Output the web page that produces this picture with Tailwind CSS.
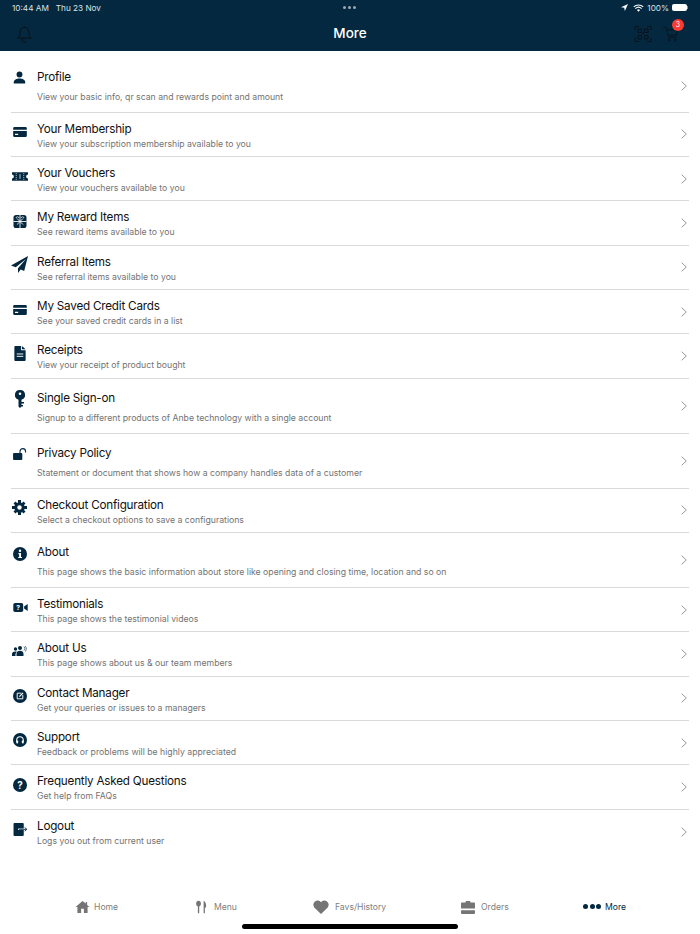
<!DOCTYPE html>
<html lang="en">
<head>
<meta charset="UTF-8">
<title>More</title>
<script src="https://cdn.jsdelivr.net/npm/@tailwindcss/browser@4"></script>
</head>
<body class="bg-white font-['Inter',sans-serif] text-black">
<div class="relative flex h-[934px] w-[700px] flex-col overflow-hidden">

  <!-- Header -->
  <header class="h-[51px] shrink-0 bg-[#03283f] text-white">
    <div class="flex h-[16px] items-center justify-between pl-[12px] pr-[12px] text-[8.2px] text-[#dbe3e8]">
      <div class="flex gap-[7px]"><span>10:44 AM</span><span>Thu 23 Nov</span></div>
      <div class="flex items-center gap-[3px]">
        <svg class="h-[7px] w-[7px]" viewBox="0 0 10 10"><path d="M10 0 0 4.500l4.600.8.9 4.700z" fill="#fff"/></svg>
        <svg class="ml-[2px] h-[8px] w-[11px]" viewBox="0 0 12 8" fill="none" stroke="#fff" stroke-width="1.200"><path d="M.8 2.800a7.600 7.600 0 0 1 10.400 0M2.600 4.600a5 5 0 0 1 6.800 0"/><path d="M6 8 4.300 6.200a2.500 2.500 0 0 1 3.400 0z" fill="#fff" stroke="none"/></svg>
        <span>100%</span>
        <div class="flex items-center"><div class="h-[7px] w-[15px] rounded-[2px] bg-white"></div><div class="h-[3px] w-[1px] bg-white/50"></div></div>
      </div>
    </div>
    <div class="relative flex h-[35px] items-center justify-between pl-[16px] pr-[20px]">
      <svg class="h-[18px] w-[17px]" viewBox="0 0 17 17" fill="none" stroke="#0b0f14" stroke-width=".9"><path d="M8.500 1.800c-3 0-4.300 2.200-4.300 5 0 3-1 4.500-2.400 5.800h13.400c-1.400-1.300-2.400-2.800-2.400-5.800 0-2.800-1.300-5-4.300-5zM8.500 1.800V.6M6.800 12.800a1.800 1.800 0 0 0 3.400 3.200"/></svg>
      <div class="absolute left-0 right-0 top-[8px] text-center text-[13.5px] font-medium leading-[19px]">More</div>
      <div class="flex items-center gap-[10px]">
        <svg class="h-[18px] w-[18px]" viewBox="0 0 18 18" fill="none" stroke="#0b0f14" stroke-width=".9"><path d="M1 5V1.500h4M13 1.500h4V5M17 13v3.500h-4M5 16.500H1V13"/><path d="M4 4h3.500v3.500H4zM10.500 4H14v3.500h-3.500zM4 10.500h3.500V14H4zM10.500 10.500H14V14h-3.500zM8 9l2-1.500"/></svg>
        <div class="relative h-[17px] w-[18px]">
          <svg class="h-[17px] w-[18px]" viewBox="0 0 18 20" fill="none" stroke="#0b0f14" stroke-width=".9"><path d="M0 2.500h3l3.300 12h9M4 5.500h13l-1.800 6.500H6"/><circle cx="7" cy="17.500" r="1.200"/><circle cx="14" cy="17.500" r="1.200"/></svg>
          <div class="absolute right-[-4px] top-[-6px] flex h-[12px] w-[12px] items-center justify-center rounded-full bg-[#fb3a30] text-[7px] text-white">3</div>
        </div>
      </div>
    </div>
  </header>

  <!-- List -->
  <main class="flex flex-col pl-[11px] pr-[11px]">

    <a class="flex h-[61.5px] items-start border-b border-[#d9d9d9]">
      <div class="w-[26px] shrink-0 pl-[2px] pt-[20px]"><svg class="h-[13px] w-[13px]" viewBox="0 0 16 15" fill="#03283f"><circle cx="8" cy="3.800" r="3.600"/><path d="M1 15v-1.800C1 10 4.500 8.600 8 8.600s7 1.400 7 4.600V15z"/></svg></div>
      <div class="flex-1 pt-[18px]"><div class="mb-[5.5px] text-[11.7px] leading-[16px] tracking-[-0.22px] text-[#111]">Profile</div><div class="text-[8.7px] leading-[13px] text-[#737373]">View your basic info, qr scan and rewards point and amount</div></div>
      <svg class="mr-[2px] mt-[30px] h-[10px] w-[6px]" viewBox="0 0 6 10" fill="none" stroke="#999"><path d="m.7.700 4.600 4.300L.7 9.300"/></svg>
    </a>

    <a class="flex h-[44.35px] items-center border-b border-[#d9d9d9]">
      <div class="mb-[4px] w-[26px] shrink-0 pl-[2px]"><svg class="h-[10px] w-[14px]" viewBox="0 0 15 11" fill="#03283f"><path d="M0 1.500A1.500 1.500 0 0 1 1.500 0h12A1.500 1.500 0 0 1 15 1.500V3H0zM0 4.500h15v5A1.500 1.500 0 0 1 13.500 11h-12A1.500 1.500 0 0 1 0 9.500zM2 7.500v1.300h3.500V7.500z" fill-rule="evenodd"/></svg></div>
      <div class="flex-1 pt-[3px]"><div class="text-[11.7px] leading-[16px] tracking-[-0.22px] text-[#111]">Your Membership</div><div class="mt-[1px] text-[8.7px] leading-[13px] text-[#737373]">View your subscription membership available to you</div></div>
      <svg class="mr-[2px] h-[10px] w-[6px]" viewBox="0 0 6 10" fill="none" stroke="#999"><path d="m.7.700 4.600 4.300L.7 9.300"/></svg>
    </a>

    <a class="flex h-[44.35px] items-center border-b border-[#d9d9d9]">
      <div class="mb-[4px] w-[26px] shrink-0 pl-[1px]"><svg class="h-[9px] w-[16px]" viewBox="0 0 17 9" fill="#03283f"><path d="M0 0h17v2.500a2 2 0 0 0 0 4V9H0V6.500a2 2 0 0 0 0-4z"/><path d="M4 1.500h1M4 3.500h1M4 5.500h1M4 7.500h1M12 1.500h1M12 3.500h1M12 5.500h1M12 7.500h1M8.500 2v5" stroke="#fff" stroke-width=".8"/></svg></div>
      <div class="flex-1 pt-[3px]"><div class="text-[11.7px] leading-[16px] tracking-[-0.22px] text-[#111]">Your Vouchers</div><div class="mt-[1px] text-[8.7px] leading-[13px] text-[#737373]">View your vouchers available to you</div></div>
      <svg class="mr-[2px] h-[10px] w-[6px]" viewBox="0 0 6 10" fill="none" stroke="#999"><path d="m.7.700 4.600 4.300L.7 9.300"/></svg>
    </a>

    <a class="flex h-[44.35px] items-center border-b border-[#d9d9d9]">
      <div class="mb-[3px] w-[26px] shrink-0 pl-[2px]"><svg class="h-[13px] w-[14px]" viewBox="0 0 15 15"><rect width="15" height="15" rx="3" fill="#03283f"/><path d="M0 7.500h15M7.500 0v15M7.500 7.500 4 4M7.500 7.500 11 4M7.500 7.500 4 11M7.500 7.500 11 11" stroke="#fff" stroke-width="1"/><path d="M3 3.500a1.500 1.500 0 0 1 3 0M9 3.500a1.500 1.500 0 0 1 3 0" stroke="#fff" fill="none" stroke-width=".8"/></svg></div>
      <div class="flex-1 pt-[3px]"><div class="text-[11.7px] leading-[16px] tracking-[-0.22px] text-[#111]">My Reward Items</div><div class="mt-[1px] text-[8.7px] leading-[13px] text-[#737373]">See reward items available to you</div></div>
      <svg class="mr-[2px] h-[10px] w-[6px]" viewBox="0 0 6 10" fill="none" stroke="#999"><path d="m.7.700 4.600 4.300L.7 9.300"/></svg>
    </a>

    <a class="flex h-[44.35px] items-center border-b border-[#d9d9d9]">
      <div class="mb-[5px] w-[26px] shrink-0"><svg class="h-[17px] w-[17px]" viewBox="0 0 17 17" fill="#03283f"><path d="M17 0 0 9.500l4.700 1.700L15 3 7 12.300V17l2.700-3.500 3.500 1.500z"/></svg></div>
      <div class="flex-1 pt-[3px]"><div class="text-[11.7px] leading-[16px] tracking-[-0.22px] text-[#111]">Referral Items</div><div class="mt-[1px] text-[8.7px] leading-[13px] text-[#737373]">See referral items available to you</div></div>
      <svg class="mr-[2px] h-[10px] w-[6px]" viewBox="0 0 6 10" fill="none" stroke="#999"><path d="m.7.700 4.600 4.300L.7 9.300"/></svg>
    </a>

    <a class="flex h-[44.35px] items-center border-b border-[#d9d9d9]">
      <div class="mb-[4px] w-[26px] shrink-0 pl-[2px]"><svg class="h-[10px] w-[14px]" viewBox="0 0 15 11" fill="#03283f"><path d="M0 1.500A1.500 1.500 0 0 1 1.500 0h12A1.500 1.500 0 0 1 15 1.500V3H0zM0 4.500h15v5A1.500 1.500 0 0 1 13.500 11h-12A1.500 1.500 0 0 1 0 9.500zM2 7.500v1.300h3.500V7.500z" fill-rule="evenodd"/></svg></div>
      <div class="flex-1 pt-[3px]"><div class="text-[11.7px] leading-[16px] tracking-[-0.22px] text-[#111]">My Saved Credit Cards</div><div class="mt-[1px] text-[8.7px] leading-[13px] text-[#737373]">See your saved credit cards in a list</div></div>
      <svg class="mr-[2px] h-[10px] w-[6px]" viewBox="0 0 6 10" fill="none" stroke="#999"><path d="m.7.700 4.600 4.300L.7 9.300"/></svg>
    </a>

    <a class="flex h-[44.35px] items-center border-b border-[#d9d9d9]">
      <div class="mb-[4px] w-[26px] shrink-0 pl-[3px]"><svg class="h-[15px] w-[12px]" viewBox="0 0 12 16" fill="#03283f"><path d="M1 0h6v4.500h5V15a1 1 0 0 1-1 1H1a1 1 0 0 1-1-1V1a1 1 0 0 1 1-1zM8 0l4 3.500H8z"/><path d="M2.500 8.500h7M2.500 11h7" stroke="#fff" stroke-width="1"/></svg></div>
      <div class="flex-1 pt-[3px]"><div class="text-[11.7px] leading-[16px] tracking-[-0.22px] text-[#111]">Receipts</div><div class="mt-[1px] text-[8.7px] leading-[13px] text-[#737373]">View your receipt of product bought</div></div>
      <svg class="mr-[2px] h-[10px] w-[6px]" viewBox="0 0 6 10" fill="none" stroke="#999"><path d="m.7.700 4.600 4.300L.7 9.300"/></svg>
    </a>

    <a class="flex h-[55px] items-center border-b border-[#d9d9d9]">
      <div class="w-[26px] shrink-0 self-start pl-[4px] pt-[11px]"><svg class="h-[18px] w-[10px]" viewBox="0 0 10 18" fill="#03283f"><path d="M5 0a5 5 0 0 1 1.500 9.800V12H9v1.500H6.500V15H8v1.500H6.500L5 18l-1.500-1.500V9.800A5 5 0 0 1 5 0zm0 2.500a1.300 1.300 0 1 0 0 2.600 1.300 1.300 0 0 0 0-2.600z"/></svg></div>
      <div class="flex-1 self-start pt-[11px]"><div class="mb-[6.5px] text-[11.7px] leading-[16px] tracking-[-0.22px] text-[#111]">Single Sign-on</div><div class="text-[8.7px] leading-[13px] text-[#737373]">Signup to a different products of Anbe technology with a single account</div></div>
      <svg class="mr-[2px] h-[10px] w-[6px]" viewBox="0 0 6 10" fill="none" stroke="#999"><path d="m.7.700 4.600 4.300L.7 9.300"/></svg>
    </a>

    <a class="flex h-[55px] items-center border-b border-[#d9d9d9]">
      <div class="w-[26px] shrink-0 self-start pl-[2px] pt-[14px]"><svg class="h-[12px] w-[14px]" viewBox="0 0 15 13" fill="#03283f"><rect y="5.500" width="10" height="7.500" rx="1"/><path d="M7.500 5.500V3.700a3 3 0 0 1 6 0V5" fill="none" stroke="#03283f" stroke-width="1.200"/></svg></div>
      <div class="flex-1 self-start pt-[11px]"><div class="mb-[6.5px] text-[11.7px] leading-[16px] tracking-[-0.22px] text-[#111]">Privacy Policy</div><div class="text-[8.7px] leading-[13px] text-[#737373]">Statement or document that shows how a company handles data of a customer</div></div>
      <svg class="mr-[2px] h-[10px] w-[6px]" viewBox="0 0 6 10" fill="none" stroke="#999"><path d="m.7.700 4.600 4.300L.7 9.300"/></svg>
    </a>

    <a class="flex h-[44.35px] items-center border-b border-[#d9d9d9]">
      <div class="mb-[5px] w-[26px] shrink-0 pl-[1px]"><svg class="h-[15px] w-[15px]" viewBox="0 0 15 15" fill="#03283f"><circle cx="7.500" cy="7.500" r="5.200"/><path d="M6 0h3v3H6zM6 12h3v3H6zM0 6h3v3H0zM12 6h3v3h-3zM1.500 3.500l2-2 2 2-2 2zM9.500 3.500l2-2 2 2-2 2zM1.500 11.500l2-2 2 2-2 2zM9.500 11.500l2-2 2 2-2 2z"/><circle cx="7.500" cy="7.500" r="2.200" fill="#fff"/></svg></div>
      <div class="flex-1 pt-[3px]"><div class="text-[11.7px] leading-[16px] tracking-[-0.22px] text-[#111]">Checkout Configuration</div><div class="mt-[1px] text-[8.7px] leading-[13px] text-[#737373]">Select a checkout options to save a configurations</div></div>
      <svg class="mr-[2px] h-[10px] w-[6px]" viewBox="0 0 6 10" fill="none" stroke="#999"><path d="m.7.700 4.600 4.300L.7 9.300"/></svg>
    </a>

    <a class="flex h-[55px] items-center border-b border-[#d9d9d9]">
      <div class="w-[26px] shrink-0 self-start pl-[2px] pt-[14px]"><svg class="h-[14px] w-[14px]" viewBox="0 0 15 15"><circle cx="7.500" cy="7.500" r="7.500" fill="#03283f"/><circle cx="7.500" cy="4" r="1.300" fill="#fff"/><path d="M5.800 6.500h2.800v4.200h1v1.200H5.600v-1.200h1V7.700h-.8z" fill="#fff"/></svg></div>
      <div class="flex-1 self-start pt-[11px]"><div class="mb-[6.5px] text-[11.7px] leading-[16px] tracking-[-0.22px] text-[#111]">About</div><div class="text-[8.7px] leading-[13px] text-[#737373]">This page shows the basic information about store like opening and closing time, location and so on</div></div>
      <svg class="mr-[2px] h-[10px] w-[6px]" viewBox="0 0 6 10" fill="none" stroke="#999"><path d="m.7.700 4.600 4.300L.7 9.300"/></svg>
    </a>

    <a class="flex h-[44.35px] items-center border-b border-[#d9d9d9]">
      <div class="mb-[4px] w-[26px] shrink-0 pl-[2px]"><svg class="h-[9px] w-[15px]" viewBox="0 0 16 10" fill="#03283f"><rect width="11" height="10" rx="2"/><path d="m12 4 4-3v8l-4-3z"/><text x="5.500" y="8" text-anchor="middle" font-size="7.500" font-weight="700" fill="#fff" font-family="Inter,sans-serif">?</text></svg></div>
      <div class="flex-1 pt-[3px]"><div class="text-[11.7px] leading-[16px] tracking-[-0.22px] text-[#111]">Testimonials</div><div class="mt-[1px] text-[8.7px] leading-[13px] text-[#737373]">This page shows the testimonial videos</div></div>
      <svg class="mr-[2px] h-[10px] w-[6px]" viewBox="0 0 6 10" fill="none" stroke="#999"><path d="m.7.700 4.600 4.300L.7 9.300"/></svg>
    </a>

    <a class="flex h-[44.35px] items-center border-b border-[#d9d9d9]">
      <div class="mb-[6px] w-[26px] shrink-0 pl-[1px]"><svg class="h-[10px] w-[16px]" viewBox="0 0 16 10" fill="#03283f"><circle cx="3.500" cy="3" r="1.700"/><circle cx="8" cy="2" r="2"/><path d="M0 10V8c0-1.700 1.500-2.500 3.500-2.500.5 0 1 .1 1.400.2A5 5 0 0 0 3.500 8v2zM4.500 10V8c0-2 1.500-3.200 3.500-3.200s3.500 1.200 3.500 3.200v2z"/><path d="M12 .5a3 3 0 0 1 0 4M13.500 0a5 5 0 0 1 0 5.500" fill="none" stroke="#03283f" stroke-width=".6"/></svg></div>
      <div class="flex-1 pt-[3px]"><div class="text-[11.7px] leading-[16px] tracking-[-0.22px] text-[#111]">About Us</div><div class="mt-[1px] text-[8.7px] leading-[13px] text-[#737373]">This page shows about us &amp; our team members</div></div>
      <svg class="mr-[2px] h-[10px] w-[6px]" viewBox="0 0 6 10" fill="none" stroke="#999"><path d="m.7.700 4.600 4.300L.7 9.300"/></svg>
    </a>

    <a class="flex h-[44.35px] items-center border-b border-[#d9d9d9]">
      <div class="mb-[4px] w-[26px] shrink-0 pl-[2px]"><svg class="h-[14px] w-[14px]" viewBox="0 0 15 15"><circle cx="7.500" cy="7.500" r="7.500" fill="#03283f"/><path d="M9 4.500H4.500v6h6V6.500" fill="none" stroke="#fff"/><path d="M6.800 8.200 10.800 4.200" stroke="#fff" stroke-width="1.200"/></svg></div>
      <div class="flex-1 pt-[3px]"><div class="text-[11.7px] leading-[16px] tracking-[-0.22px] text-[#111]">Contact Manager</div><div class="mt-[1px] text-[8.7px] leading-[13px] text-[#737373]">Get your queries or issues to a managers</div></div>
      <svg class="mr-[2px] h-[10px] w-[6px]" viewBox="0 0 6 10" fill="none" stroke="#999"><path d="m.7.700 4.600 4.300L.7 9.300"/></svg>
    </a>

    <a class="flex h-[44.35px] items-center border-b border-[#d9d9d9]">
      <div class="mb-[5px] w-[26px] shrink-0 pl-[2px]"><svg class="h-[14px] w-[14px]" viewBox="0 0 15 15"><circle cx="7.500" cy="7.500" r="7.500" fill="#03283f"/><path d="M4 9V7.500a3.500 3.500 0 0 1 7 0V9" fill="none" stroke="#fff" stroke-width="1.200"/><rect x="3.500" y="8" width="2" height="3.200" rx=".8" fill="#fff"/><rect x="9.500" y="8" width="2" height="3.200" rx=".8" fill="#fff"/></svg></div>
      <div class="flex-1 pt-[3px]"><div class="text-[11.7px] leading-[16px] tracking-[-0.22px] text-[#111]">Support</div><div class="mt-[1px] text-[8.7px] leading-[13px] text-[#737373]">Feedback or problems will be highly appreciated</div></div>
      <svg class="mr-[2px] h-[10px] w-[6px]" viewBox="0 0 6 10" fill="none" stroke="#999"><path d="m.7.700 4.600 4.300L.7 9.300"/></svg>
    </a>

    <a class="flex h-[44.35px] items-center border-b border-[#d9d9d9]">
      <div class="mb-[4px] w-[26px] shrink-0 pl-[2px]"><svg class="h-[14px] w-[14px]" viewBox="0 0 15 15"><circle cx="7.500" cy="7.500" r="7.500" fill="#03283f"/><text x="7.500" y="11.300" text-anchor="middle" font-size="10.500" font-weight="700" fill="#fff" font-family="Inter,sans-serif">?</text></svg></div>
      <div class="flex-1 pt-[3px]"><div class="text-[11.7px] leading-[16px] tracking-[-0.22px] text-[#111]">Frequently Asked Questions</div><div class="mt-[1px] text-[8.7px] leading-[13px] text-[#737373]">Get help from FAQs</div></div>
      <svg class="mr-[2px] h-[10px] w-[6px]" viewBox="0 0 6 10" fill="none" stroke="#999"><path d="m.7.700 4.600 4.300L.7 9.300"/></svg>
    </a>

    <a class="flex h-[44.35px] items-center">
      <div class="mb-[5px] w-[26px] shrink-0 pl-[2px]"><svg class="h-[13px] w-[15px]" viewBox="0 0 15 14" fill="#03283f"><path d="M1 0h9a1 1 0 0 1 1 1v5H5v1.500h6V13a1 1 0 0 1-1 1H1a1 1 0 0 1-1-1V1a1 1 0 0 1 1-1z"/><path d="M6 6.800h8M12 4.800l2.300 2-2.300 2" fill="none" stroke="#03283f"/></svg></div>
      <div class="flex-1 pt-[3px]"><div class="text-[11.7px] leading-[16px] tracking-[-0.22px] text-[#111]">Logout</div><div class="mt-[1px] text-[8.7px] leading-[13px] text-[#737373]">Logs you out from current user</div></div>
      <svg class="mr-[2px] h-[10px] w-[6px]" viewBox="0 0 6 10" fill="none" stroke="#999"><path d="m.7.700 4.600 4.300L.7 9.300"/></svg>
    </a>
  </main>

  <!-- Tab bar -->
  <nav class="absolute bottom-[17px] left-0 flex h-[20px] w-full items-center text-[8.6px] text-[#808080]">
    <div class="ml-[75px] flex w-[121px] items-center gap-[4px]">
      <svg class="h-[12px] w-[15px]" viewBox="0 0 15 13" fill="#757575"><path d="M7.500 0 0 6.500h2V13h4V8.500h3V13h4V6.500h2l-2.500-2.200V1H11v1.800z"/></svg><span>Home</span>
    </div>
    <div class="flex w-[117px] items-center gap-[7px]">
      <svg class="h-[14px] w-[11px]" viewBox="0 0 13 15" fill="#757575"><ellipse cx="3" cy="3.500" rx="2.800" ry="3.500"/><rect x="2.200" y="5" width="1.600" height="10" rx=".8"/><path d="M9 0c2 1 3 3.500 3 6 0 1.500-.7 2.500-1.500 2.800V15H9z"/></svg><span>Menu</span>
    </div>
    <div class="flex w-[147px] items-center gap-[6px]">
      <svg class="h-[14px] w-[16px]" viewBox="0 0 17 15" fill="#757575"><path d="M8.500 15 1.300 8A4.500 4.500 0 0 1 8.500 2.300 4.500 4.500 0 0 1 15.700 8z"/></svg><span>Favs/History</span>
    </div>
    <div class="flex w-[123px] items-center gap-[5px]">
      <svg class="h-[13px] w-[16px]" viewBox="0 0 15 14" fill="#757575"><path d="M5 1.500V.5A.5.500 0 0 1 5.500 0h4a.5.500 0 0 1 .5.500v1h4a1 1 0 0 1 1 1V8H0V2.500a1 1 0 0 1 1-1zM0 10h15v3a1 1 0 0 1-1 1H1a1 1 0 0 1-1-1z"/></svg><span>Orders</span>
    </div>
    <div class="flex items-center gap-[4px] text-[#03283f]">
      <div class="flex gap-[1.500px]"><span class="h-[5px] w-[5px] rounded-full bg-[#03283f]"></span><span class="h-[5px] w-[5px] rounded-full bg-[#03283f]"></span><span class="h-[5px] w-[5px] rounded-full bg-[#03283f]"></span></div><span>More</span>
    </div>
  </nav>
  <div class="absolute bottom-[5px] left-[242px] h-[5px] w-[216px] rounded-full bg-black"></div>

  <!-- Multitasking dots -->
  <div class="absolute left-[343px] top-[6px] flex gap-[2px]"><span class="h-[3px] w-[3px] rounded-full bg-white/60"></span><span class="h-[3px] w-[3px] rounded-full bg-white/60"></span><span class="h-[3px] w-[3px] rounded-full bg-white/60"></span></div>
</div>
</body>
</html>
